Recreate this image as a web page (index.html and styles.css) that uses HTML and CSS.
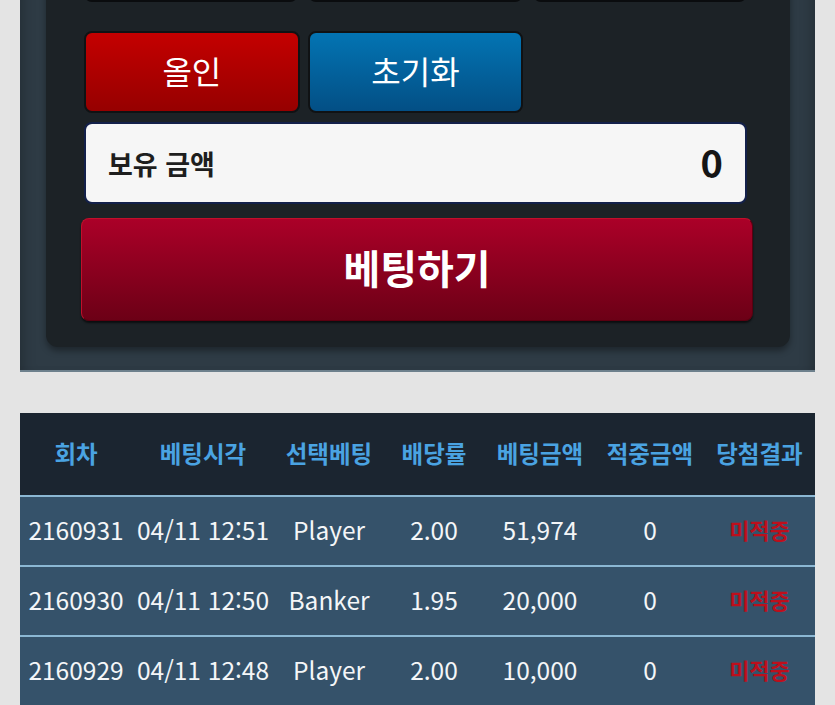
FILE: index.html
```html
<!DOCTYPE html>
<html lang="ko">
<head>
<meta charset="utf-8">
<title>베팅</title>
<link rel="stylesheet" href="styles.css">
</head>
<body>
<div class="page">
  <section class="panel">
    <div class="inner">
      <div class="btn-grid">
        <button class="chip"></button>
        <button class="chip"></button>
        <button class="chip"></button>
      </div>
      <div class="btn-grid action-row">
        <button class="act red">올인</button>
        <button class="act blue">초기화</button>
      </div>
      <div class="balance">
        <span class="bal-label">보유 금액</span>
        <span class="bal-value">0</span>
      </div>
      <button class="bet">베팅하기</button>
    </div>
  </section>

  <table class="history">
    <colgroup>
      <col class="c1"><col class="c2"><col class="c3"><col class="c4"><col class="c5"><col class="c6"><col class="c7">
    </colgroup>
    <thead>
      <tr>
        <th>회차</th><th>베팅시각</th><th>선택베팅</th><th>배당률</th><th>베팅금액</th><th>적중금액</th><th>당첨결과</th>
      </tr>
    </thead>
    <tbody>
      <tr>
        <td>2160931</td><td>04/11 12:51</td><td>Player</td><td>2.00</td><td>51,974</td><td>0</td><td class="lose">미적중</td>
      </tr>
      <tr>
        <td>2160930</td><td>04/11 12:50</td><td>Banker</td><td>1.95</td><td>20,000</td><td>0</td><td class="lose">미적중</td>
      </tr>
      <tr>
        <td>2160929</td><td>04/11 12:48</td><td>Player</td><td>2.00</td><td>10,000</td><td>0</td><td class="lose">미적중</td>
      </tr>
    </tbody>
  </table>
</div>
</body>
</html>
```

FILE: styles.css
```css
html, body {
  margin: 0;
  padding: 0;
  background: #e4e4e4;
  font-family: "Noto Sans CJK KR", "Noto Sans", sans-serif;
  overflow: hidden;
}

.page {
  margin-top: -110px;
}

.panel {
  margin: 0 20px;
  background: #2e3b45;
  padding: 0 25px 23px 26px;
  border-bottom: 2px solid #6d808c;
  box-shadow: inset 12px 0 14px -10px rgba(0,0,0,0.25), inset -12px 0 14px -10px rgba(0,0,0,0.25);
}

.inner {
  background: #1c2226;
  border-radius: 0 0 12px 12px;
  padding: 30px 43px 26px 38px;
  box-shadow: 0 4px 6px rgba(0,0,0,0.35);
  display: flex;
  flex-direction: column;
}

.btn-grid {
  display: grid;
  grid-template-columns: repeat(3, 1fr);
  gap: 10px;
}

button {
  font-family: inherit;
  cursor: pointer;
}

.chip {
  height: 82px;
  background: #1c2226;
  border: 2px solid #0a0c0e;
  border-radius: 8px;
}

.action-row {
  margin-top: 29px;
  gap: 8px;
}

.act {
  height: 82px;
  border: 2px solid #101214;
  border-radius: 8px;
  color: #fff;
  font-size: 32px;
  font-weight: 400;
  padding: 0 0 4px 0;
}

.red {
  background: linear-gradient(#c40000, #960000);
}

.blue {
  background: linear-gradient(#0374b3, #034f85);
}

.balance {
  margin-top: 9px;
  height: 82px;
  box-sizing: border-box;
  background: #f6f6f6;
  border: 2px solid #13204a;
  border-radius: 8px;
  display: flex;
  align-items: center;
  justify-content: space-between;
  padding: 0 22px 4px 22px;
}

.bal-label {
  font-size: 27px;
  font-weight: 700;
  color: #1e1e1e;
  margin-top: 4px;
}

.bal-value {
  font-size: 38px;
  font-weight: 700;
  color: #151515;
}

.bet {
  margin: 14px -6px 0 -3px;
  height: 103px;
  border: 1px solid #5a0010;
  border-left-color: #c0102a;
  border-top-color: #c0102a;
  border-radius: 8px;
  background: linear-gradient(#ab0028, #6c0016);
  box-shadow: 0 2px 2px rgba(0,0,0,0.6);
  color: #fff;
  font-size: 40px;
  font-weight: 700;
  padding: 0 0 6px 0;
}

.history {
  margin: 41px 20px 0 20px;
  width: 795px;
  border-collapse: collapse;
  table-layout: fixed;
}

.c1 { width: 112px; }
.c2 { width: 142px; }
.c3 { width: 110px; }
.c4 { width: 100px; }
.c5 { width: 112px; }
.c6 { width: 108px; }
.c7 { width: 111px; }

.history th {
  background: #1b2530;
  color: #4aa3e2;
  font-size: 23.5px;
  font-weight: 700;
  height: 80px;
  padding: 0 0 2px 0;
  text-align: center;
  white-space: nowrap;
}

.history td {
  background: #35526a;
  border-top: 2px solid #8bb7d3;
  color: #f4f6f8;
  font-size: 24.5px;
  font-weight: 400;
  height: 64px;
  padding: 0 0 4px 0;
  text-align: center;
  white-space: nowrap;
}

.history td.lose {
  color: #bd0f1c;
  font-size: 22px;
  font-weight: 700;
}
```
